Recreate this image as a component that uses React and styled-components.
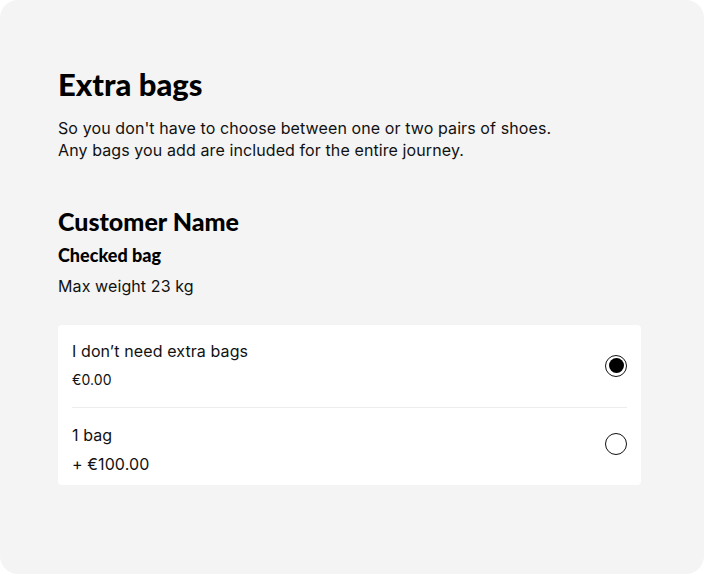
import React, { useState } from 'react';
import styled, { createGlobalStyle } from 'styled-components';

const GlobalStyle = createGlobalStyle`
  html, body {
    margin: 0;
    padding: 0;
    background: #ffffff;
  }
  body {
    font-family: Inter, "Liberation Sans", sans-serif;
    color: #111111;
  }
`

const Panel = styled.div`
  box-sizing: border-box;
  width: 704px;
  height: 574px;
  background: #f4f4f4;
  border-radius: 18px;
  padding: 65px 63px 0 58px;
`

const Title = styled.h1`
  margin: 0;
  font-family: Lato, sans-serif;
  font-weight: 900;
  font-size: 31px;
  line-height: 38px;
  color: #000;
`

const Lead = styled.p`
  margin: 14px 0 0;
  font-size: 16px;
  line-height: 22px;
  letter-spacing: 0.1px;
  color: #111;
`

const Name = styled.h2`
  margin: 45px 0 0;
  font-family: Lato, sans-serif;
  font-weight: 900;
  font-size: 25px;
  line-height: 30px;
  color: #000;
`

const SubTitle = styled.h3`
  margin: 7px 0 0;
  font-family: Lato, sans-serif;
  font-weight: 900;
  font-size: 18px;
  line-height: 24px;
  color: #000;
`

const Note = styled.p`
  margin: 8px 0 0;
  font-size: 16px;
  line-height: 22px;
  letter-spacing: 0.1px;
`

const Card = styled.div`
  margin-top: 28px;
  background: #ffffff;
  border-radius: 4px;
  padding: 0 14px;
`

const Option = styled.label`
  display: flex;
  align-items: center;
  justify-content: space-between;
  padding: ${p => (p.$first ? '15px 0 16px' : '16px 0 10px')};
  border-top: ${p => (p.$first ? 'none' : '1px solid #ececec')};
  cursor: pointer;
`

const OptionText = styled.div`
  display: flex;
  flex-direction: column;
  gap: 7px;
`

const OptionLabel = styled.span`
  font-size: 16px;
  line-height: 22px;
  letter-spacing: 0.1px;
`

const Price = styled.span`
  font-size: ${p => (p.$small ? '14px' : '16px')};
  line-height: 22px;
  letter-spacing: 0.1px;
`

const Radio = styled.span`
  box-sizing: border-box;
  width: 22px;
  height: 22px;
  margin-bottom: ${p => (p.$last ? '12px' : '0')};
  border-radius: 50%;
  border: 1.5px solid #111;
  display: flex;
  align-items: center;
  justify-content: center;
  flex-shrink: 0;

  &::after {
    content: '';
    width: 15px;
    height: 15px;
    border-radius: 50%;
    background: ${p => (p.$checked ? '#000' : 'transparent')};
  }
`

const options = [
  { id: 'none', label: 'I don\u2019t need extra bags', price: '€0.00', small: true },
  { id: 'one', label: '1 bag', price: '+ €100.00' },
]

export default function App() {
  const [selected, setSelected] = useState('none')
  return (
    <>
      <GlobalStyle />
      <Panel>
        <Title>Extra bags</Title>
        <Lead>
          So you don't have to choose between one or two pairs of shoes.
          <br />
          Any bags you add are included for the entire journey.
        </Lead>
        <Name>Customer Name</Name>
        <SubTitle>Checked bag</SubTitle>
        <Note>Max weight 23 kg</Note>
        <Card>
          {options.map((o, i) => (
            <Option key={o.id} $first={i === 0} onClick={() => setSelected(o.id)}>
              <OptionText>
                <OptionLabel>{o.label}</OptionLabel>
                <Price $small={o.small}>{o.price}</Price>
              </OptionText>
              <Radio $checked={selected === o.id} $last={i === options.length - 1} />
            </Option>
          ))}
        </Card>
      </Panel>
    </>
  )
}
